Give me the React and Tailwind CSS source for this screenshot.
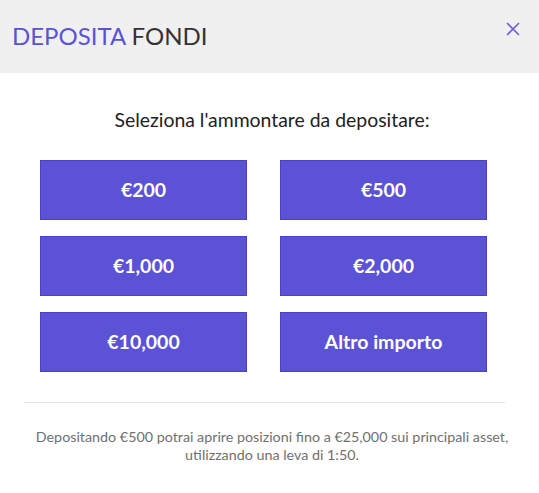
import React from 'react'

const amounts = ['€200', '€500', '€1,000', '€2,000', '€10,000', 'Altro importo']

function App() {
  return (
    <div className="w-[539px] h-[493px] bg-white font-['Lato',sans-serif]">
      <div className="h-[73px] bg-[#f0f0f0] flex items-center justify-between pl-[12px] pr-[18px]">
        <h1 className="text-[24px] leading-none pb-[1px]">
          <span className="text-[#5b52d6]">DEPOSITA</span>{' '}
          <span className="text-[#333]">FONDI</span>
        </h1>
        <button className="text-[#6a62dc] mb-[15px]">
          <svg width="16" height="16" viewBox="0 0 16 16" fill="none" stroke="currentColor" strokeWidth="1.6">
            <path d="M2 2L14 14M14 2L2 14" />
          </svg>
        </button>
      </div>
      <div className="pt-[35px]">
        <p className="text-center pl-[5px] text-[19.4px] text-[#222] leading-[24px]">Seleziona l'ammontare da depositare:</p>
        <div className="mt-[28px] ml-[40px] grid grid-cols-2 gap-x-[33px] gap-y-[16px] w-[447px]">
          {amounts.map((a) => (
            <button
              key={a}
              className="h-[60px] bg-[#5b52d6] border border-[#4b41c9] text-white text-[19.5px] font-bold"
            >
              {a}
            </button>
          ))}
        </div>
      </div>
      <div className="ml-[24px] mr-[34px] mt-[30px] border-t border-[#e2e2e2]" />
      <p className="mt-[25px] text-center pl-[5px] text-[14.3px] leading-[18px] text-[#707070]">
        Depositando €500 potrai aprire posizioni fino a €25,000 sui principali asset,
        <br />
        utilizzando una leva di 1:50.
      </p>
    </div>
  )
}

export default App
